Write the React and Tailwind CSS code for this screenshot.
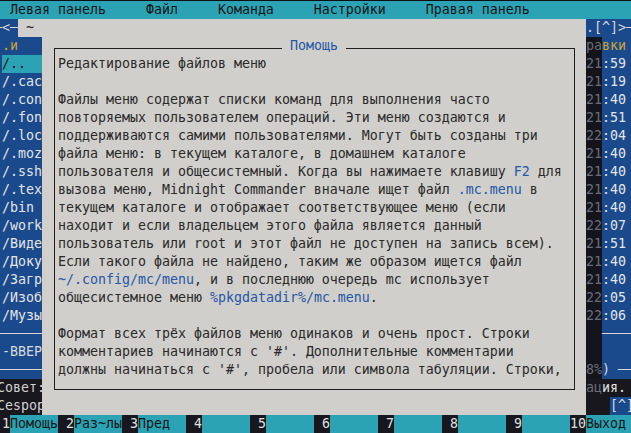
const files = ["/.cac", "/.con", "/.fon", "/.loc", "/.moz", "/.ssh", "/.tex", "/bin ", "/work", "/Виде", "/Доку", "/Загр", "/Изоб", "/Музы"];
const times = ["21:59", "21:19", "21:40", "21:51", "22:04", "21:40", "21:40", "21:40", "21:40", "22:07", "21:51", "21:40", "21:40", "22:05", "22:06"];

function Link({ children }) {
  return <span className="text-[#2457a6]">{children}</span>;
}

function LeftColumn() {
  return (
    <div className="w-[42px] shrink-0 overflow-hidden flex flex-col">
      <div className="h-[18px] flex">
        <span className="-ml-[6px] w-[24px] shrink-0 bg-[#1a4a8c] text-[#d8d8d8]">─&lt;─</span>
        <span className="w-[24px] shrink-0 bg-[#d0cfcb] text-[#2a2a2a]"> ~ </span>
      </div>
      <div className="h-[18px] bg-[#1a4a8c] pl-[2px] text-[#cda434]">.и</div>
      <div className="h-[18px] bg-[#1a4a8c] pl-[2px]">
        <div className="h-[18px] bg-[#2ba3b4] text-[#151515]">/..</div>
      </div>
      {files.map((f) => (
        <div key={f} className="h-[18px] bg-[#1a4a8c] pl-[2px] text-[#e4e4e4]">{f}</div>
      ))}
      <div className="h-[18px] bg-[#1a4a8c] -ml-[6px] text-[#d8d8d8]">──────</div>
      <div className="h-[18px] bg-[#1a4a8c] pl-[2px] text-[#d8d8d8]">-ВВЕР</div>
      <div className="h-[18px] bg-[#1a4a8c] -ml-[6px] text-[#d8d8d8]">──────</div>
      <div className="h-[18px] bg-[#17171d] -ml-[3px] text-[#d0d0d0]">Совет:</div>
      <div className="h-[18px] bg-[#17171d] -ml-[3px] text-[#d0d0d0]">Сespop</div>
    </div>
  );
}

function Dialog() {
  return (
    <div className="w-[544px] shrink-0 bg-[#d0cfcb] pt-[29px] pl-[12px]">
      <div className="relative w-[521px] h-[342px] border border-[#1e1e1e] pl-[3px] pt-[6px] text-[#2a2a2a]">
        <div className="absolute -top-[12px] left-[227px] h-[18px] bg-[#d0cfcb] text-[#2457a6]"> Помощь </div>
        <div className="h-[18px]">Редактирование файлов меню</div>
        <div className="h-[18px]"></div>
        <div className="h-[18px]">Файлы меню содержат списки команд для выполнения часто</div>
        <div className="h-[18px]">повторяемых пользователем операций. Эти меню создаются и</div>
        <div className="h-[18px]">поддерживаются самими пользователями. Могут быть созданы три</div>
        <div className="h-[18px]">файла меню: в текущем каталоге, в домашнем каталоге</div>
        <div className="h-[18px]">пользователя и общесистемный. Когда вы нажимаете клавишу <Link>F2</Link> для</div>
        <div className="h-[18px]">вызова меню, Midnight Commander вначале ищет файл <Link>.mc.menu</Link> в</div>
        <div className="h-[18px]">текущем каталоге и отображает соответствующее меню (если</div>
        <div className="h-[18px]">находит и если владельцем этого файла является данный</div>
        <div className="h-[18px]">пользователь или root и этот файл не доступен на запись всем).</div>
        <div className="h-[18px]">Если такого файла не найдено, таким же образом ищется файл</div>
        <div className="h-[18px]"><Link>~/.config/mc/menu</Link>, и в последнюю очередь mc использует</div>
        <div className="h-[18px]">общесистемное меню <Link>%pkgdatadir%/mc.menu</Link>.</div>
        <div className="h-[18px]"></div>
        <div className="h-[18px]">Формат всех трёх файлов меню одинаков и очень прост. Строки</div>
        <div className="h-[18px]">комментариев начинаются с '#'. Дополнительные комментарии</div>
        <div className="h-[18px]">должны начинаться с '#', пробела или символа табуляции. Строки,</div>
      </div>
    </div>
  );
}

function ShadowRow({ left, right, rightClass }) {
  return (
    <div className="h-[18px] flex">
      <span className="w-[16px] shrink-0 bg-[#13141c] text-[#6c6c78]">{left}</span>
      <span className={`flex-1 bg-[#1a4a8c] ${rightClass}`}>{right}</span>
    </div>
  );
}

function RightColumn() {
  return (
    <div className="flex-1 overflow-hidden flex flex-col">
      <div className="h-[18px] bg-[#1a4a8c] text-[#d8d8d8]">.[^]&gt;──</div>
      <ShadowRow left="ра" right="вки" rightClass="text-[#cda434]" />
      {times.map((t, i) => (
        <ShadowRow key={i} left={t.slice(0, 2)} right={t.slice(2)} rightClass="text-[#e4e4e4]" />
      ))}
      <ShadowRow left="" right="────" rightClass="text-[#d8d8d8]" />
      <ShadowRow left="" right="" rightClass="" />
      <ShadowRow left="8%" right=") ──" rightClass="text-[#d8d8d8]" />
      <div className="h-[18px] bg-[#17171d]">
        <span className="text-[#6c6c78]">ац</span>
        <span className="text-[#e4e4e4]">ия.</span>
      </div>
      <div className="h-[18px] flex bg-[#17171d]">
        <span className="w-[24px] shrink-0"></span>
        <span className="flex-1 bg-[#1a4a8c] text-[#d8d8d8]">[^]</span>
      </div>
    </div>
  );
}

function Num({ children }) {
  return <span className="w-[16px] shrink-0 bg-[#17171d] text-[#e0e0e0]">{children}</span>;
}
function Label({ children }) {
  return <span className="w-[48px] shrink-0 bg-[#2ba3b4] text-[#151515]">{children}</span>;
}

function ButtonBar() {
  return (
    <div className="h-[18px] flex">
      <span className="w-[10px] shrink-0 pl-[2px] bg-[#17171d] text-[#e0e0e0]">1</span>
      <Label>Помощь</Label>
      <Num> 2</Num>
      <Label>Раз~лы</Label>
      <Num> 3</Num>
      <Label>Пред</Label>
      <Num> 4</Num>
      <Label></Label>
      <Num> 5</Num>
      <Label></Label>
      <Num> 6</Num>
      <Label></Label>
      <Num> 7</Num>
      <Label></Label>
      <Num> 8</Num>
      <Label></Label>
      <Num> 9</Num>
      <Label></Label>
      <Num>10</Num>
      <span className="flex-1 bg-[#2ba3b4] text-[#151515]">Выход</span>
    </div>
  );
}

export default function App() {
  return (
    <div className="w-[631px] h-[433px] overflow-hidden bg-[#101014] pt-px flex flex-col font-['DejaVu_Sans_Mono',monospace] text-[13.29px] leading-[18px] whitespace-pre">
      <div className="h-[18px] shrink-0 bg-[#2ba3b4] text-[#151515] pl-[10px]">Левая панель     Файл     Команда     Настройки     Правая панель</div>
      <div className="flex h-[396px] shrink-0">
        <LeftColumn />
        <Dialog />
        <RightColumn />
      </div>
      <ButtonBar />
    </div>
  );
}
